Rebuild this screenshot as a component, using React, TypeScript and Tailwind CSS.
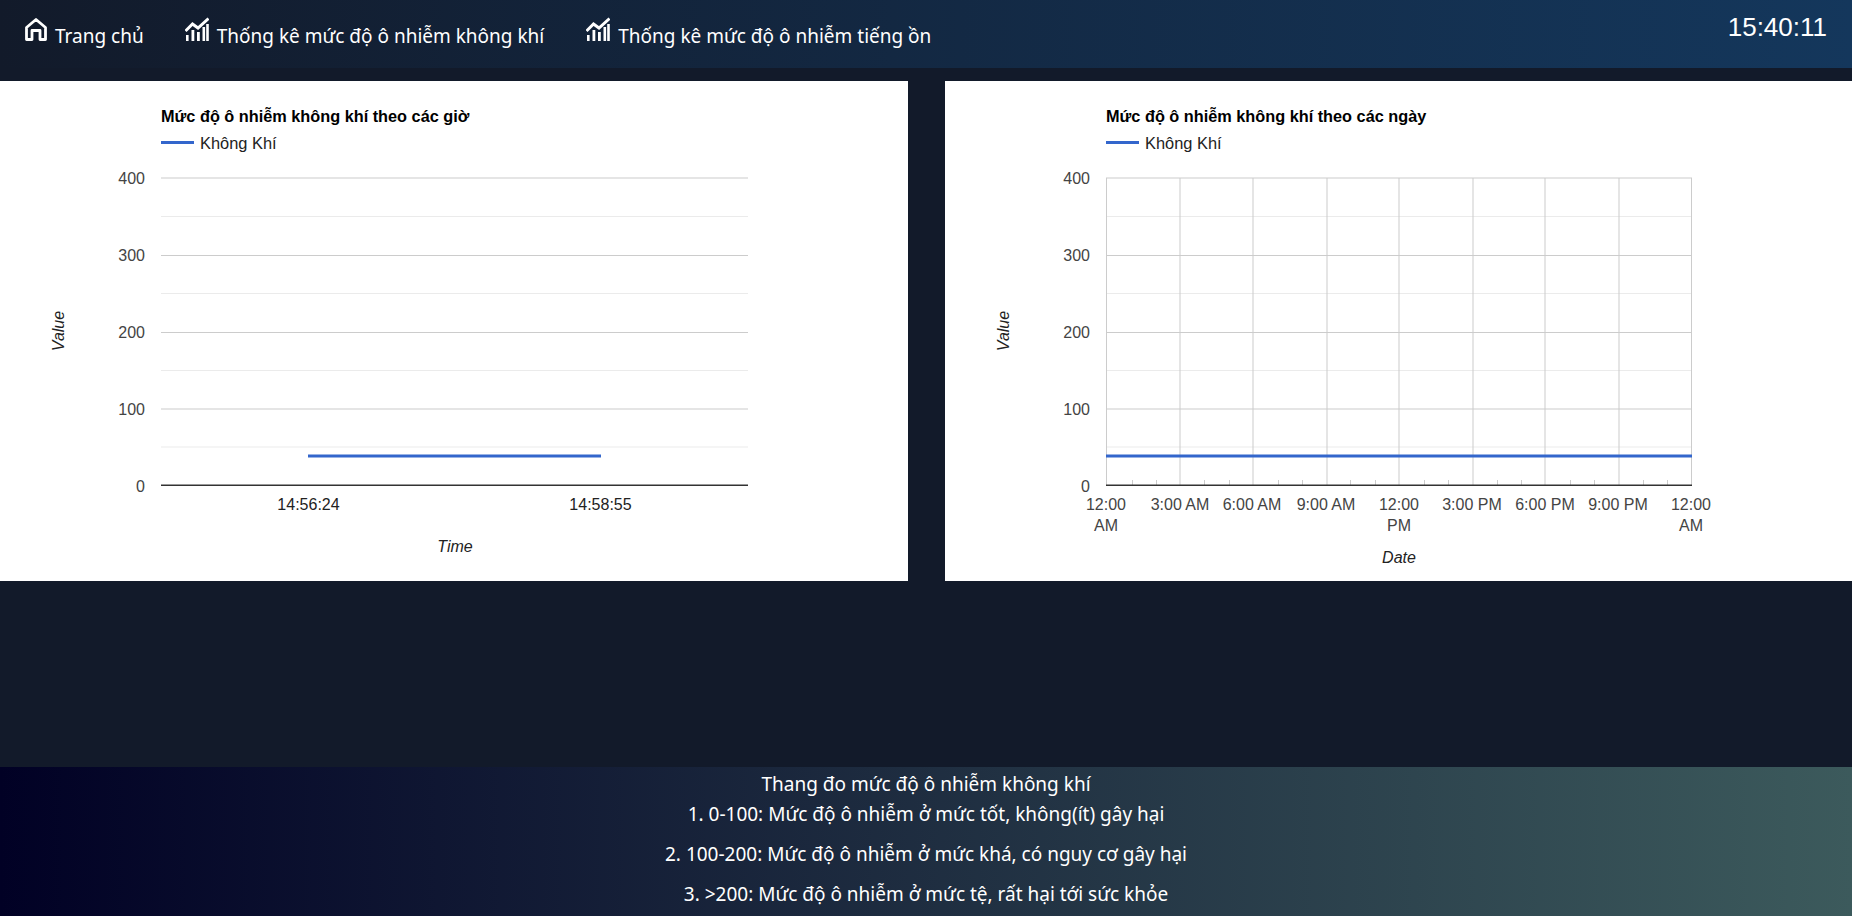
const SANS = "font-['Noto_Sans',sans-serif]";

const HomeIcon = () => (
  <svg width="26" height="26" viewBox="0 0 26 26" fill="none" className="shrink-0">
    <path
      d="M3.5 22.5V10.5L13 2.5L22.5 10.5V22.5H17V13.5H9V22.5H3.5Z"
      stroke="white"
      strokeWidth="2.8"
      strokeLinejoin="round"
    />
  </svg>
);

const ChartIcon = () => (
  <svg width="24" height="24" viewBox="0 0 24 24" fill="none" className="shrink-0">
    <path d="M0.5 14L7.5 7L13 11L23.5 1.5" stroke="white" strokeWidth="3" />
    <path d="M1 18h2.6v6H1zM6.5 13h2.8v11H6.5zM12 15h2.8v9H12zM17.5 10h2.6v14h-2.6zM21.2 7h2.6v17h-2.6z" fill="white" />
  </svg>
);

const navItems = [
  { icon: <HomeIcon />, label: "Trang chủ", className: "ml-[23px] mr-[41px]", gap: "ml-[6px]" },
  { icon: <ChartIcon />, label: "Thống kê mức độ ô nhiễm không khí", className: "mr-[42px]", gap: "ml-[8px]" },
  { icon: <ChartIcon />, label: "Thống kê mức độ ô nhiễm tiếng ồn", className: "", gap: "ml-[8px]" },
];

const yTicks = [
  { label: "400", y: 177.5, labelY: 178 },
  { label: "300", y: 255, labelY: 255 },
  { label: "200", y: 332, labelY: 332 },
  { label: "100", y: 408.5, labelY: 409 },
];
const minorY = [216, 293, 370, 446.5];
const majorX = [1179.5, 1252.5, 1326.5, 1398.5, 1472.5, 1544.5, 1618.5];
const minorX = [1132, 1156, 1204, 1229, 1278, 1302, 1350, 1375, 1424, 1448, 1497, 1521, 1570, 1594, 1643, 1667];

const hourLabels = [
  { x: 1180, label: "3:00 AM" },
  { x: 1252, label: "6:00 AM" },
  { x: 1326, label: "9:00 AM" },
  { x: 1472, label: "3:00 PM" },
  { x: 1545, label: "6:00 PM" },
  { x: 1618, label: "9:00 PM" },
];

type ChartFrameProps = {
  title: string;
  left: number;
  right: number;
  yLabelX: number;
  valueX: number;
  children: React.ReactNode;
};

// y values inside the panel are page y minus 81
const ChartFrame = ({ title, left, right, yLabelX, valueX, children }: ChartFrameProps) => (
  <svg width="100%" height="500" className="block" style={{ fontFamily: "'Liberation Sans', Arial, sans-serif" }}>
    <text x={left} y={41} fontSize="16.3" fontWeight="700" fill="#000">
      {title}
    </text>
    <rect x={left} y={60} width={33} height={3} fill="#3366cc" />
    <text x={left + 39} y={68} fontSize="16.4" fill="#222">
      Không Khí
    </text>
    {minorY.map((y) => (
      <rect key={y} x={left} y={y - 81} width={right - left} height={1} fill="#ebebeb" />
    ))}
    {yTicks.map((t) => (
      <g key={t.label}>
        <rect x={left} y={t.y - 81} width={right - left} height={1} fill="#cccccc" />
        <text x={yLabelX} y={t.labelY - 81 + 6} fontSize="16" textAnchor="end" fill="#444">
          {t.label}
        </text>
      </g>
    ))}
    <text x={yLabelX} y={411} fontSize="16" textAnchor="end" fill="#444">
      0
    </text>
    <text
      transform={`translate(${valueX} 250) rotate(-90)`}
      fontSize="16"
      fontStyle="italic"
      textAnchor="middle"
      fill="#222"
    >
      Value
    </text>
    {children}
    <rect x={left} y={403.5} width={right - left} height={1.5} fill="#333" />
  </svg>
);

const HourChart = () => (
  <ChartFrame title="Mức độ ô nhiễm không khí theo các giờ" left={161} right={748} yLabelX={145} valueX={64}>
    <rect x={308} y={373.5} width={293} height={3} fill="#3366cc" />
    <text x={308.5} y={429} fontSize="16" textAnchor="middle" fill="#222">
      14:56:24
    </text>
    <text x={600.5} y={429} fontSize="16" textAnchor="middle" fill="#222">
      14:58:55
    </text>
    <text x={455} y={471} fontSize="16" fontStyle="italic" textAnchor="middle" fill="#222">
      Time
    </text>
  </ChartFrame>
);

const DayChart = () => {
  const ox = 945;
  const left = 1106 - ox;
  const right = 1692 - ox;
  return (
    <ChartFrame title="Mức độ ô nhiễm không khí theo các ngày" left={left} right={right} yLabelX={1090 - ox} valueX={1009 - ox}>
      {[1106, ...majorX, 1691].map((x) => (
        <rect key={x} x={x - ox} y={97} width={1} height={307} fill="#cccccc" />
      ))}
      {minorX.map((x) => (
        <rect key={x} x={x - ox} y={399} width={1} height={5} fill="#cccccc" />
      ))}
      <rect x={left} y={373.5} width={right - left} height={3} fill="#3366cc" />
      {hourLabels.map((h) => (
        <text key={h.x} x={h.x - ox} y={429} fontSize="16" textAnchor="middle" fill="#444">
          {h.label}
        </text>
      ))}
      {[1106, 1399, 1691].map((x, i) => (
        <g key={x}>
          <text x={x - ox} y={429} fontSize="16" textAnchor="middle" fill="#444">
            12:00
          </text>
          <text x={x - ox} y={450} fontSize="16" textAnchor="middle" fill="#444">
            {i === 1 ? "PM" : "AM"}
          </text>
        </g>
      ))}
      <text x={1399 - ox} y={482} fontSize="16" fontStyle="italic" textAnchor="middle" fill="#222">
        Date
      </text>
    </ChartFrame>
  );
};

const scaleLines = [
  "1. 0-100: Mức độ ô nhiễm ở mức tốt, không(ít) gây hại",
  "2. 100-200: Mức độ ô nhiễm ở mức khá, có nguy cơ gây hại",
  "3. >200: Mức độ ô nhiễm ở mức tệ, rất hại tới sức khỏe",
];

const App = () => {
  return (
    <div className={`h-[916px] w-full overflow-hidden bg-[#121a2a] flex flex-col ${SANS}`}>
      <header className="h-[68px] shrink-0 flex items-start justify-between text-white bg-linear-to-r/srgb from-[#121a2a] to-[#14375c]">
        <nav className="flex pt-[17px]">
          {navItems.map((item) => (
            <a key={item.label} className={`flex items-start ${item.className}`}>
              {item.icon}
              <span className={`${item.gap} mt-[6px] text-[19px] leading-[26px] whitespace-nowrap`}>{item.label}</span>
            </a>
          ))}
        </nav>
        <div className="mr-[25px] mt-[12px] text-[26px] leading-[30px] font-['Liberation_Sans',sans-serif]">
          15:40:11
        </div>
      </header>

      <main className="flex-1 pt-[13px]">
        <div className="grid grid-cols-[908px_907px] gap-x-[37px]">
          <section className="h-[500px] bg-white">
            <HourChart />
          </section>
          <section className="h-[500px] bg-white">
            <DayChart />
          </section>
        </div>
      </main>

      <footer className="h-[149px] shrink-0 flex flex-col items-center text-white text-[19px] leading-[26px] pt-[4px] bg-linear-to-r/srgb from-[#010125] to-[#3c5a5c]">
        <p>Thang đo mức độ ô nhiễm không khí</p>
        <div className="mt-[4px] flex flex-col gap-[14px] items-center">
          {scaleLines.map((line) => (
            <p key={line}>{line}</p>
          ))}
        </div>
      </footer>
    </div>
  );
};

export default App;
